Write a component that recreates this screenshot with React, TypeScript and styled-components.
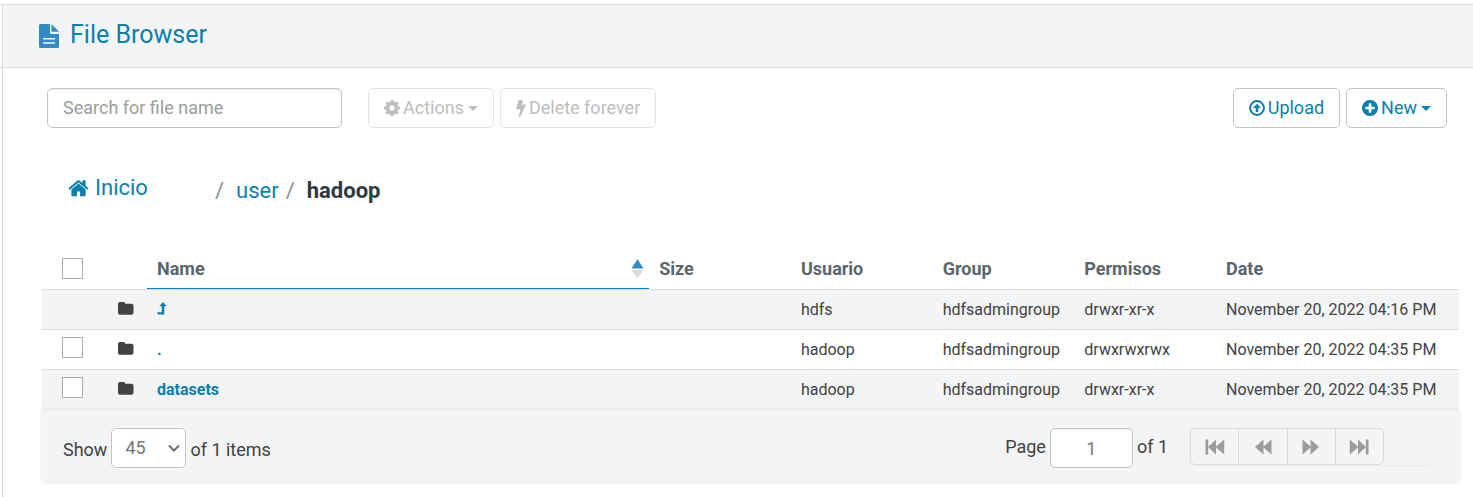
import React from "react";
import styled, { createGlobalStyle } from "styled-components";

const GlobalStyle = createGlobalStyle`
  *, *::before, *::after { box-sizing: border-box; }
  body {
    margin: 0;
    background: #fff;
    color: #424242;
    font-family: Roboto, "Liberation Sans", sans-serif;
    font-size: 18px;
    line-height: 24px;
  }
  button, input, select { font: inherit; margin: 0; }
  a { color: #0b7fad; text-decoration: none; }
`;

const Shell = styled.div`
  display: grid;
  grid-template-columns: 3px 1fr;
  min-height: 100vh;
  border-top: 4px solid #fff;
`;
const Rail = styled.div`
  border-top: 1px solid #d9dbdd;
  border-right: 1px solid #d9dbdd;
`;
const RailCap = styled.div`
  height: 63px;
  border-bottom: 1px solid #d9dbdd;
`;
const Main = styled.main`
  min-width: 0;
  border-top: 1px solid #d9dbdd;
`;
const Header = styled.header`
  display: flex;
  align-items: center;
  gap: 11px;
  height: 63px;
  margin-left: 1px;
  padding: 0 35px;
  background: #f3f4f6;
  border-bottom: 1px solid #d9dbdd;
`;
const Title = styled.h1`
  margin: 0;
  padding-bottom: 2px;
  font-size: 25px;
  line-height: 32px;
  font-weight: 400;
`;
const Toolbar = styled.div`
  display: flex;
  gap: 6px;
  padding: 20px 26px 0 44px;
`;
const Search = styled.input`
  width: 295px;
  height: 40px;
  margin-right: 20px;
  padding: 0 15px 2px;
  border: 1px solid #c4c4c4;
  border-radius: 5px;
  box-shadow: inset 0 1px 2px rgba(0, 0, 0, 0.08);
  outline: 0;
  background: #fff;
  color: #424242;
  &::placeholder { color: #9c9c9c; opacity: 1; }
`;
const Button = styled.button`
  display: inline-flex;
  align-items: center;
  gap: 3px;
  height: 40px;
  padding: 0 15px;
  border: 1px solid #c4c4c4;
  border-radius: 5px;
  background: #fff;
  color: #0b7fad;
  white-space: nowrap;
  &:disabled { border-color: #e4e4e4; color: #bdbdbd; }
`;
const Spacer = styled.div`
  flex: 1;
`;
const Caret = styled.span`
  margin-left: 1px;
  border: 5px solid transparent;
  border-top-color: currentColor;
  border-bottom: 0;
`;
const Crumbs = styled.nav`
  display: flex;
  align-items: center;
  gap: 7px;
  padding: 44px 0 0 65px;
  font-size: 22px;
  line-height: 32px;
`;
const HomeLink = styled.a`
  display: flex;
  align-items: center;
  gap: 6px;
  width: 140px;
  padding-bottom: 6px;
`;
const Slash = styled.span`
  color: #8a9096;
`;
const Current = styled.strong`
  margin-left: 5px;
  font-weight: 700;
  color: #2f3a42;
`;
const UserLink = styled.a`
  margin-left: 5px;
`;

const Content = styled.div`
  padding: 38px 14px 0 39px;
`;
const Table = styled.table`
  width: 100%;
  table-layout: fixed;
  border-collapse: separate;
  border-spacing: 0;
`;
const Col = styled.col<{ $w?: string }>`
  width: ${(p) => p.$w ?? "auto"};
`;
const Th = styled.th<{ $sorted?: boolean }>`
  height: 42px;
  padding: 0 10px;
  border-bottom: 1px solid #d9dbdd;
  box-shadow: ${(p) => (p.$sorted ? "inset 0 -1px 0 #0b7bd4" : "none")};
  text-align: left;
  font-weight: 700;
  color: #5a656d;
`;
const SortHead = styled.div`
  display: flex;
  align-items: center;
  justify-content: space-between;
  margin-right: -5px;
`;
const Check = styled.input`
  appearance: none;
  display: block;
  width: 21px;
  height: 21px;
  margin: 0 0 0 10px;
  border: 1px solid #a9adb1;
  background: #fff;
`;
const Td = styled.td`
  height: 40px;
  padding: 0 10px;
  border-bottom: 1px solid #d9dbdd;
  font-size: 16px;
  line-height: 20px;
  white-space: nowrap;
  a { font-weight: 700; }
  svg { display: block; margin-bottom: 2px; }
  ${Check} { margin-bottom: 5px; }
`;
const Row = styled.tr`
  background: #fff;
  &:nth-child(odd) { background: #f3f4f6; }
  &:last-child ${Td} { height: 39px; border-bottom: 0; }
`;
const Footer = styled.footer`
  display: flex;
  align-items: flex-start;
  gap: 4px;
  height: 72px;
  padding: 18px 25px 0 21px;
  border-top: 1px solid #e8e9eb;
  background: #f3f4f6;
  box-shadow: 0 1px 4px rgba(0, 0, 0, 0.12);
`;
const CountLabel = styled.label`
  line-height: 44px;
`;
const PageLabel = styled.label`
  line-height: 38px;
`;
const SelectWrap = styled.span`
  position: relative;
  svg { position: absolute; right: 6px; top: 16px; pointer-events: none; }
`;
const Select = styled.select`
  appearance: none;
  display: block;
  width: 75px;
  height: 40px;
  padding: 0 13px;
  border: 1px solid #c4c4c4;
  border-radius: 5px;
  background: #fff;
  color: #757575;
`;
const PageInput = styled.input`
  width: 83px;
  height: 40px;
  border: 1px solid #c4c4c4;
  border-radius: 5px;
  box-shadow: inset 0 1px 2px rgba(0, 0, 0, 0.08);
  background: #fff;
  color: #757575;
  text-align: center;
`;
const Pager = styled.div`
  width: 244px;
  margin-left: 18px;
  border-radius: 5px;
  box-shadow: 0 1px 2px rgba(0, 0, 0, 0.05);
`;
const PagerGroup = styled.div`
  display: flex;
  width: 194px;
  height: 37px;
  border: 1px solid #d9dadc;
  border-radius: 5px;
`;
const PagerButton = styled.button`
  display: flex;
  flex: 1;
  align-items: center;
  justify-content: center;
  padding: 0;
  border: 0;
  background: transparent;
  color: #9c9c9c;
  & + & { border-left: 1px solid #d9dadc; }
`;

const ICONS = {
  home: "M1472 992v480q0 26-19 45t-45 19h-384v-384h-256v384h-384q-26 0-45-19t-19-45v-480q0-1 .5-3t.5-3l575-474 575 474q1 2 1 6zm223-69l-62 74q-8 9-21 11h-3q-13 0-21-7l-692-577-692 577q-12 8-24 7-13-2-21-11l-62-74q-8-10-7-23.5t11-21.5l719-599q32-26 76-26t76 26l244 204v-195q0-14 9-23t23-9h192q14 0 23 9t9 23v408l219 182q10 8 11 21.5t-7 23.5z",
  cog: "M1152 896q0-106-75-181t-181-75-181 75-75 181 75 181 181 75 181-75 75-181zm512-109v222q0 12-8 23t-20 13l-185 28q-19 54-39 91 35 50 107 138 10 12 10 25t-9 23q-27 37-99 108t-94 71q-12 0-26-9l-138-108q-44 23-91 38-16 136-29 186-7 28-36 28h-222q-14 0-24.5-8.5t-11.5-21.5l-28-184q-49-16-90-37l-141 107q-10 9-25 9-14 0-25-11-126-114-165-168-7-10-7-23 0-12 8-23 15-21 51-66.5t54-70.5q-27-50-41-99l-183-27q-13-2-21-12.5t-8-23.5v-222q0-12 8-23t19-13l186-28q14-46 39-92-40-57-107-138-10-12-10-24 0-10 9-23 26-36 98.5-107.5t94.5-71.5q13 0 26 10l138 107q44-23 91-38 16-136 29-186 7-28 36-28h222q14 0 24.5 8.5t11.5 21.5l28 184q49 16 90 37l142-107q9-9 24-9 13 0 25 10 129 119 165 170 7 8 7 22 0 12-8 23-15 21-51 66.5t-54 70.5q26 50 41 98l183 28q13 2 21 12.5t8 23.5z",
  bolt: "M1333 566q18 20 7 44l-540 1157q-13 25-42 25-4 0-14-2-17-5-25.5-19t-4.5-30l197-808-406 101q-4 1-12 1-18 0-31-11-18-15-13-39l201-825q4-14 16-23t28-9h328q19 0 32 12.5t13 29.5q0 8-5 18l-171 463 396-98q8-2 12-2 19 0 34 15z",
  plus: "M1344 960v-128q0-26-19-45t-45-19h-256v-256q0-26-19-45t-45-19h-128q-26 0-45 19t-19 45v256h-256q-26 0-45 19t-19 45v128q0 26 19 45t45 19h256v256q0 26 19 45t45 19h128q26 0 45-19t19-45v-256h256q26 0 45-19t19-45zm320-64q0 209-103 385.5t-279.5 279.5-385.5 103-385.5-103-279.5-279.5-103-385.5 103-385.5 279.5-279.5 385.5-103 385.5 103 279.5 279.5 103 385.5z",
};

const GLYPH_BOX = {
  home: "48 180 1696 1396",
  cog: "128 128 1536 1536",
  bolt: "400 -40 1000 1872",
  plus: "128 128 1536 1536",
};

function Glyph({ name, w, h }: { name: keyof typeof ICONS; w: number; h: number }) {
  return (
    <svg
      width={w}
      height={h}
      viewBox={GLYPH_BOX[name]}
      fill="currentColor"
      stroke="currentColor"
      strokeWidth={name === "bolt" ? 80 : 0}
      aria-hidden="true"
    >
      <path d={ICONS[name]} />
    </svg>
  );
}

const UploadIcon = () => (
  <svg width="16" height="16" viewBox="0 0 16 16" aria-hidden="true">
    <circle cx="8" cy="8" r="6.9" fill="none" stroke="currentColor" strokeWidth="2" />
    <path d="M8 3.8l4 4.1H9.3V12H6.7V7.9H4z" fill="currentColor" />
  </svg>
);
const FileIcon = () => (
  <svg width="20" height="24" viewBox="0 0 20 24" aria-hidden="true">
    <path d="M1.5 0H11v8.500q0 1.500 1.500 1.500H20v12.500q0 1.500-1.500 1.500h-17Q0 24 0 22.500v-21Q0 0 1.500 0z" fill="#338bc3" />
    <path d="M12.500 0L20 7.800h-7.500z" fill="#338bc3" />
    <path d="M4 14.800h12M4 19h12" stroke="#f3f4f6" strokeWidth="1.600" />
  </svg>
);
const FolderIcon = () => (
  <svg width="16" height="13" viewBox="0 0 16 13" aria-hidden="true">
    <path d="M1.800 0h3.600q1.800 0 1.800 1.800h6.200Q15.500 1.800 15.500 3.800v7q0 2-2 2H2q-2 0-2-2V2Q0 0 1.800 0z" fill="#424242" />
  </svg>
);
const UpIcon = () => (
  <svg width="10" height="13" viewBox="0 0 10 13" aria-hidden="true">
    <path d="M6 0l3.700 4.300H7.300V12.500H1.200L0 10.300h4.700V4.300H2.300z" fill="#0b7fad" />
  </svg>
);
const SortIcon = () => (
  <svg width="13" height="20" viewBox="0 0 13 20" aria-hidden="true">
    <path d="M6.500 0L12.500 9.500h-12z" fill="#338bc3" />
    <path d="M6.500 19.500L12.500 11h-12z" fill="#dcdcdc" />
  </svg>
);
const ChevronIcon = () => (
  <svg width="12" height="9" viewBox="0 0 12 9" aria-hidden="true">
    <path d="M1 1.500l5 5 5-5" fill="none" stroke="#6b6b6b" strokeWidth="2" />
  </svg>
);
const DoubleArrow = ({ bar, flip }: { bar?: boolean; flip?: boolean }) => (
  <svg width="20" height="16" viewBox="0 0 20 16" fill="currentColor" aria-hidden="true">
    <g transform={flip ? "translate(20 0) scale(-1 1)" : undefined}>
      {bar && <path d="M.5.5h2.700v15H.5z" />}
      <path d={bar ? "M11 .5v15L3 8zM19.200.5v15L10.500 8z" : "M10.500 .5v15L2 8zM18.500 .5v15L10 8z"} />
    </g>
  </svg>
);

const rows = [
  { name: "up", user: "hdfs", perms: "drwxr-xr-x", date: "November 20, 2022 04:16 PM" },
  { name: ".", user: "hadoop", perms: "drwxrwxrwx", date: "November 20, 2022 04:35 PM" },
  { name: "datasets", user: "hadoop", perms: "drwxr-xr-x", date: "November 20, 2022 04:35 PM" },
];

export default function App() {
  return (
    <>
      <GlobalStyle />
      <Shell>
        <Rail><RailCap /></Rail>
        <Main>
          <Header>
            <FileIcon />
            <Title><a href="#browser">File Browser</a></Title>
          </Header>
          <Toolbar>
            <Search type="text" placeholder="Search for file name" aria-label="Search for file name" />
            <Button type="button" disabled><Glyph name="cog" w={16} h={16} />Actions<Caret /></Button>
            <Button type="button" disabled><Glyph name="bolt" w={10} h={18} />Delete forever</Button>
            <Spacer />
            <Button type="button"><UploadIcon />Upload</Button>
            <Button type="button"><Glyph name="plus" w={16} h={16} />New<Caret /></Button>
          </Toolbar>
          <Crumbs aria-label="Path">
            <HomeLink href="#home"><Glyph name="home" w={21} h={18} />Inicio</HomeLink>
            <Slash>/</Slash>
            <UserLink href="#user">user</UserLink>
            <Slash>/</Slash>
            <Current>hadoop</Current>
          </Crumbs>
          <Content>
            <Table>
              <colgroup>
                <Col $w="66px" /><Col $w="39px" /><Col />
                <Col $w="10%" /><Col $w="10%" /><Col $w="10%" /><Col $w="10%" /><Col $w="243px" />
              </colgroup>
              <thead>
                <tr>
                  <Th><Check type="checkbox" aria-label="Select all" /></Th>
                  <Th />
                  <Th $sorted aria-sort="ascending"><SortHead>Name<SortIcon /></SortHead></Th>
                  <Th>Size</Th>
                  <Th>Usuario</Th>
                  <Th>Group</Th>
                  <Th>Permisos</Th>
                  <Th>Date</Th>
                </tr>
              </thead>
              <tbody>
                {rows.map((r) => (
                  <Row key={r.name}>
                    <Td>{r.name !== "up" && <Check type="checkbox" aria-label={`Select ${r.name}`} />}</Td>
                    <Td><FolderIcon /></Td>
                    <Td><a href={`#${r.name}`} aria-label={r.name}>{r.name === "up" ? <UpIcon /> : r.name}</a></Td>
                    <Td />
                    <Td>{r.user}</Td>
                    <Td>hdfsadmingroup</Td>
                    <Td>{r.perms}</Td>
                    <Td>{r.date}</Td>
                  </Row>
                ))}
              </tbody>
            </Table>
            <Footer>
              <CountLabel htmlFor="count">Show</CountLabel>
              <SelectWrap>
                <Select id="count" defaultValue="45"><option>45</option></Select>
                <ChevronIcon />
              </SelectWrap>
              <CountLabel as="span">of 1 items</CountLabel>
              <Spacer />
              <PageLabel htmlFor="page">Page</PageLabel>
              <PageInput id="page" type="text" defaultValue="1" />
              <PageLabel as="span">of 1</PageLabel>
              <Pager>
                <PagerGroup>
                  <PagerButton type="button" aria-label="First page"><DoubleArrow bar /></PagerButton>
                  <PagerButton type="button" aria-label="Previous page"><DoubleArrow /></PagerButton>
                  <PagerButton type="button" aria-label="Next page"><DoubleArrow flip /></PagerButton>
                  <PagerButton type="button" aria-label="Last page"><DoubleArrow bar flip /></PagerButton>
                </PagerGroup>
              </Pager>
            </Footer>
          </Content>
        </Main>
      </Shell>
    </>
  );
}
